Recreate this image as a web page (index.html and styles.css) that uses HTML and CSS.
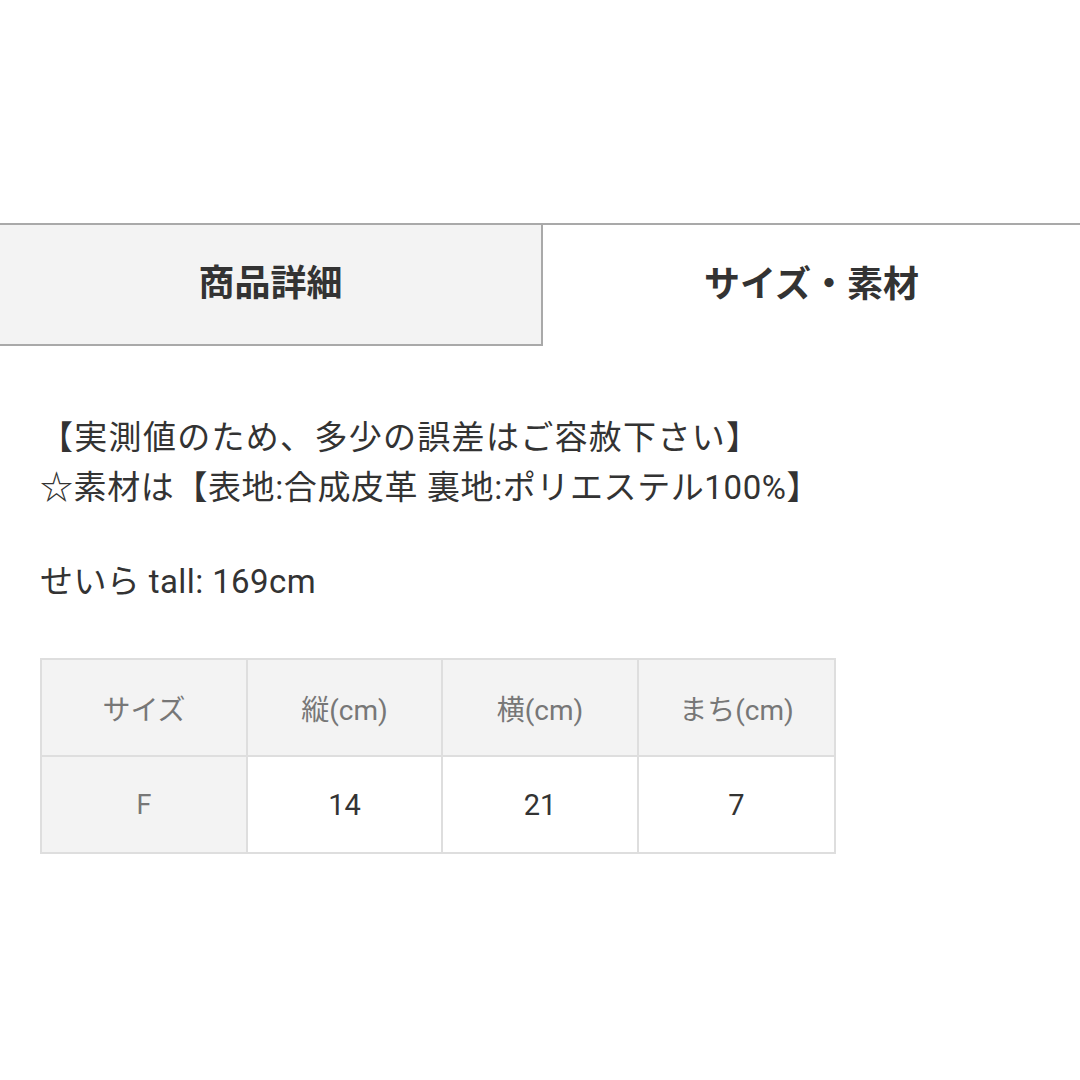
FILE: index.html
```html
<!DOCTYPE html>
<html lang="ja">
<head>
<meta charset="utf-8">
<link rel="stylesheet" href="styles.css">
</head>
<body>
<div class="page">
  <div class="tabs">
    <div class="tab tab-inactive">商品詳細</div>
    <div class="tab tab-active">サイズ・素材</div>
  </div>
  <div class="content">
    <p class="line">【実測値のため、多少の誤差はご容赦下さい】</p>
    <p class="line mixed">☆素材は【表地:合成皮革 裏地:ポリエステル100%】</p>
    <p class="line latin gap">せいら tall: 169cm</p>
    <table class="size-table">
      <colgroup>
        <col class="c1"><col class="c2"><col class="c3"><col class="c4">
      </colgroup>
      <tr class="head">
        <td class="cell-label">サイズ</td>
        <td>縦(cm)</td>
        <td>横(cm)</td>
        <td>まち(cm)</td>
      </tr>
      <tr class="body-row">
        <td class="cell-label">F</td>
        <td>14</td>
        <td>21</td>
        <td>7</td>
      </tr>
    </table>
  </div>
</div>
</body>
</html>
```
FILE: styles.css
```css
* { box-sizing: border-box; }
html, body { margin: 0; padding: 0; background: #ffffff; }
body {
  font-family: "Roboto", "Noto Sans CJK JP", sans-serif;
  color: #333333;
  width: 1080px;
  height: 1080px;
  overflow: hidden;
}
.page { padding-top: 223px; }
.tabs {
  display: flex;
  border-top: 2px solid #a9a9a9;
  height: 123px;
}
.tab {
  display: flex;
  align-items: center;
  justify-content: center;
  font-family: "Noto Sans CJK JP", sans-serif;
  font-weight: 700;
  font-size: 36px;
  color: #333333;
  padding-bottom: 9px;
}
.tab-inactive {
  width: 543px;
  background: #f3f3f3;
  border-right: 2px solid #a9a9a9;
  border-bottom: 2px solid #a9a9a9;
}
.tab-active {
  flex: 1;
  background: #ffffff;
}
.content {
  padding: 67px 0 0 40px;
}
.line {
  margin: 0;
  font-size: 33px;
  line-height: 50px;
  color: #333333;
  letter-spacing: 1.3px;
}
.line.mixed { letter-spacing: 0.6px; }
.line.latin { letter-spacing: 0.4px; }
.line.gap { margin-top: 44px; }
.size-table {
  margin-top: 51px;
  border-collapse: collapse;
  table-layout: fixed;
  width: 794px;
}
.c1 { width: 206px; }
.c2 { width: 195px; }
.c3 { width: 196px; }
.c4 { width: 197px; }
.size-table td {
  border: 2px solid #dedede;
  height: 97px;
  text-align: center;
  vertical-align: middle;
  padding: 0;
}
.head td {
  background: #f3f3f3;
  color: #777777;
  font-size: 28px;
}
.body-row td {
  font-size: 29px;
  color: #333333;
}
.body-row td.cell-label {
  background: #f3f3f3;
  color: #777777;
  font-size: 27px;
}
```
